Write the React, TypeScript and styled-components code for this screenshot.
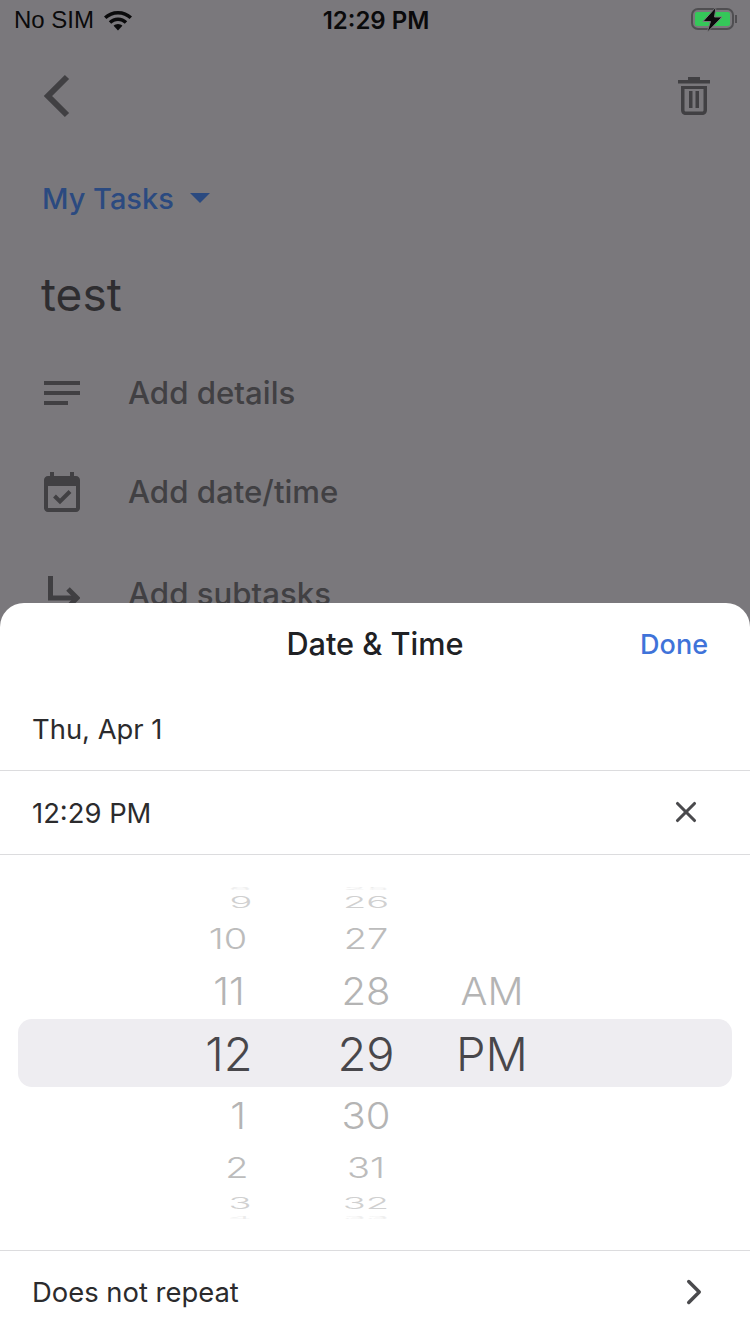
import React from "react";
import styled, { createGlobalStyle } from "styled-components";
import { ChevronRight, X } from "lucide-react";

const GlobalStyle = createGlobalStyle`
  html, body {
    margin: 0;
    padding: 0;
    background: #7a787c;
  }
  * { box-sizing: border-box; }
`;

const Root = styled.div`
  position: relative;
  width: 750px;
  height: 1334px;
  overflow: hidden;
  background: #7a787c;
  font-family: "Inter", "Liberation Sans", sans-serif;
`;

const StatusBar = styled.div`
  display: grid;
  grid-template-columns: 1fr auto 1fr;
  align-items: center;
  height: 40px;
  padding: 0 12px 0 14px;
  color: #0a0a0b;
  font-family: "Liberation Sans", sans-serif;
  font-size: 24px;
`;

const StatusLeft = styled.div`
  display: flex;
  align-items: center;
  gap: 9px;
`;

const StatusTime = styled.div`
  font-family: "Inter", sans-serif;
  font-size: 24px;
  font-weight: 600;
`;

const StatusRight = styled.div`
  display: flex;
  justify-content: flex-end;
`;

const TopBar = styled.div`
  display: flex;
  justify-content: space-between;
  align-items: center;
  height: 64px;
  margin-top: 24px;
  padding: 0 40px 0 42px;
`;

const ListPicker = styled.div`
  display: flex;
  align-items: center;
  gap: 16px;
  margin: 50px 0 0 42px;
  height: 40px;
  color: #2b4a80;
  font-size: 29px;
  font-weight: 500;
`;

const Caret = styled.div`
  width: 0;
  height: 0;
  border-left: 10px solid transparent;
  border-right: 10px solid transparent;
  border-top: 10px solid #2b4a80;
`;

const Title = styled.div`
  margin: 46px 0 0 41px;
  height: 60px;
  line-height: 60px;
  color: #2e2d30;
  font-size: 46px;
`;

const Rows = styled.div`
  display: flex;
  flex-direction: column;
  margin-top: 19px;
`;

const TaskRow = styled.div<{ $gapAbove?: number }>`
  display: flex;
  align-items: center;
  height: 99px;
  margin-top: ${({ $gapAbove }) => $gapAbove ?? 0}px;
  padding-left: 44px;
  gap: 47px;
  color: #414043;
  font-size: 31.2px;
  font-weight: 500;
`;

const IconSlot = styled.div`
  display: flex;
  width: 37px;
`;

const Sheet = styled.div`
  position: absolute;
  left: 0;
  right: 0;
  bottom: 0;
  height: 731px;
  display: flex;
  flex-direction: column;
  background: #fff;
  border-radius: 24px 24px 0 0;
  color: #202124;
`;

const SheetHeader = styled.div`
  position: relative;
  display: flex;
  justify-content: center;
  align-items: center;
  height: 84px;
  padding-bottom: 3px;
  font-size: 30.7px;
  font-weight: 500;
`;

const DoneButton = styled.div`
  position: absolute;
  right: 42px;
  top: 24px;
  line-height: 36px;
  color: #3f73d9;
  font-size: 27px;
  font-weight: 500;
`;

const SheetRow = styled.div<{ $height: number; $border?: boolean }>`
  display: flex;
  align-items: center;
  justify-content: space-between;
  height: ${({ $height }) => $height}px;
  padding: 0 33px 0 32px;
  font-size: 27.4px;
  color: #2b2b2d;
  border-bottom: ${({ $border }) => ($border ? "1px solid #dcdcde" : "none")};
`;

const RepeatRow = styled(SheetRow)`
  padding-bottom: 2px;
`;

const CloseIcon = styled(X)`
  margin: 0 14px 2px 0;
`;

const RepeatIcon = styled(ChevronRight)`
  margin-right: 2px;
`;

const Wheel = styled.div`
  position: relative;
  height: 396px;
  padding-top: 31px;
  border-bottom: 1px solid #dcdcde;
  display: flex;
`;

const Highlight = styled.div`
  position: absolute;
  left: 18px;
  right: 18px;
  top: 164px;
  height: 68px;
  border-radius: 14px;
  background: #eeedf1;
`;

const WheelColumn = styled.div<{ $left: number }>`
  position: relative;
  width: 80px;
  margin-left: ${({ $left }) => $left}px;
  display: flex;
  flex-direction: column;
  align-items: center;
`;

const WheelItem = styled.div<{
  $height: number;
  $size: number;
  $squash: number;
  $color: string;
  $shift?: number;
}>`
  display: flex;
  align-items: center;
  justify-content: center;
  height: ${({ $height }) => $height}px;
  color: ${({ $color }) => $color};
  font-size: ${({ $size }) => $size}px;
  font-weight: 300;
  transform: translateX(${({ $shift }) => $shift ?? 0}px) scaleY(${({ $squash }) => $squash});
`;

// height, font size, vertical squash, colour for each wheel slot
const slots = [
  { height: 5, size: 38, squash: 0.08, color: "#ececec" },
  { height: 22, size: 38, squash: 0.43, color: "#d0d0d0" },
  { height: 50, size: 38, squash: 0.75, color: "#bcbcbc" },
  { height: 56, size: 40, squash: 0.96, color: "#b4b4b4" },
  { height: 68, size: 47, squash: 1, color: "#48474b" },
  { height: 56, size: 40, squash: 0.93, color: "#b4b4b4" },
  { height: 48, size: 38, squash: 0.75, color: "#bcbcbc" },
  { height: 24, size: 38, squash: 0.43, color: "#d0d0d0" },
  { height: 5, size: 38, squash: 0.08, color: "#ececec" },
];

const hours = ["8", "9", "10", "11", "12", "1", "2", "3", "4"];
const hourShift = [12, 13, 0, 1, 1, 10, 9, 12, 12];
const minutes = ["25", "26", "27", "28", "29", "30", "31", "32", "33"];
const periods = ["", "", "", "AM", "PM", "", "", "", ""];

export default function App() {
  return (
    <Root>
      <GlobalStyle />
      <StatusBar>
        <StatusLeft>
          No SIM
          <svg width="30" height="22" viewBox="0 0 30 22" fill="#0a0a0b">
            <path d="M15 2C9.5 2 4.6 4 1 7.5L3.4 10C6.4 7.1 10.5 5.4 15 5.4S23.6 7.1 26.6 10L29 7.5C25.4 4 20.5 2 15 2Z" />
            <path d="M15 8.6C11.4 8.6 8.2 10 5.8 12.3L8.2 14.8C9.9 13.1 12.3 12 15 12S20.1 13.1 21.8 14.8L24.2 12.3C21.8 10 18.6 8.6 15 8.6Z" />
            <path d="M15 15C13.3 15 11.7 15.7 10.6 16.8L15 21.4L19.4 16.8C18.3 15.7 16.7 15 15 15Z" />
          </svg>
        </StatusLeft>
        <StatusTime>12:29 PM</StatusTime>
        <StatusRight>
          <svg width="48" height="24" viewBox="0 0 48 24">
            <rect x="2" y="1" width="41" height="20" rx="6" fill="none" stroke="#4f4e51" strokeWidth="2" />
            <rect x="5" y="4" width="35" height="14" rx="2" fill="#35c759" />
            <path d="M46 7v8" stroke="#4f4e51" strokeWidth="2" />
            <path d="M26 -1L13 13.5H20.5L17 24.5L32 9H24.5Z" fill="#0a0a0b" stroke="#7a787c" strokeWidth="1" />
          </svg>
        </StatusRight>
      </StatusBar>

      <TopBar>
        <svg width="30" height="44" viewBox="0 0 30 44" fill="none" stroke="#414043" strokeWidth="6">
          <path d="M25 3L6 22L25 41" />
        </svg>
        <svg width="32" height="38" viewBox="0 0 32 38" fill="#414043">
          <path d="M0 3H10V0H22V3H32V6.5H0Z" />
          <path fillRule="evenodd" d="M3 9H29V33C29 36 27 38 24 38H8C5 38 3 36 3 33ZM6.5 12V33C6.5 34 7 34.5 8 34.5H24C25 34.5 25.5 34 25.5 33V12ZM11 14H14.5V31H11ZM17.5 14H21V31H17.5Z" />
        </svg>
      </TopBar>

      <ListPicker>
        My Tasks
        <Caret />
      </ListPicker>

      <Title>test</Title>

      <Rows>
        <TaskRow>
          <IconSlot>
            <svg width="36" height="24" viewBox="0 0 36 24" fill="#414043">
              <rect width="36" height="4" />
              <rect y="10" width="36" height="4" />
              <rect y="20" width="24" height="4" />
            </svg>
          </IconSlot>
          Add details
        </TaskRow>
        <TaskRow>
          <IconSlot>
            <svg width="36" height="40" viewBox="0 0 36 40" fill="none">
              <path d="M6 0H10V4H26V0H30V4H32C34.2 4 36 5.8 36 8V36C36 38.2 34.2 40 32 40H4C1.8 40 0 38.2 0 36V8C0 5.8 1.8 4 4 4H6Z" fill="#414043" />
              <rect x="4" y="14" width="28" height="22" fill="#7a787c" />
              <path d="M10.5 24L16 29.5L26 19.5" stroke="#414043" strokeWidth="4" />
            </svg>
          </IconSlot>
          Add date/time
        </TaskRow>
        <TaskRow $gapAbove={3}>
          <IconSlot>
            <svg width="36" height="36" viewBox="0 0 36 36" fill="none" stroke="#403f42" strokeWidth="5">
              <path d="M6.5 0V22H31" />
              <path d="M24 13L33 22L24 31" />
            </svg>
          </IconSlot>
          Add subtasks
        </TaskRow>
      </Rows>

      <Sheet>
        <SheetHeader>
          Date &amp; Time
          <DoneButton>Done</DoneButton>
        </SheetHeader>
        <SheetRow $height={84} $border>Thu, Apr 1</SheetRow>
        <SheetRow $height={84} $border>
          12:29 PM
          <CloseIcon size={34} color="#4a4a4d" strokeWidth={2.2} />
        </SheetRow>
        <Wheel>
          <Highlight />
          <WheelColumn $left={188}>
            {slots.map((s, i) => (
              <WheelItem key={i} $height={s.height} $size={s.size} $squash={s.squash} $color={s.color} $shift={hourShift[i]}>
                {hours[i]}
              </WheelItem>
            ))}
          </WheelColumn>
          <WheelColumn $left={58}>
            {slots.map((s, i) => (
              <WheelItem key={i} $height={s.height} $size={s.size} $squash={s.squash} $color={s.color}>
                {minutes[i]}
              </WheelItem>
            ))}
          </WheelColumn>
          <WheelColumn $left={46}>
            {slots.map((s, i) => (
              <WheelItem key={i} $height={s.height} $size={s.size} $squash={s.squash} $color={s.color}>
                {periods[i]}
              </WheelItem>
            ))}
          </WheelColumn>
        </Wheel>
        <RepeatRow $height={83}>
          Does not repeat
          <RepeatIcon size={42} color="#4a4a4d" strokeWidth={2} />
        </RepeatRow>
      </Sheet>
    </Root>
  );
}
